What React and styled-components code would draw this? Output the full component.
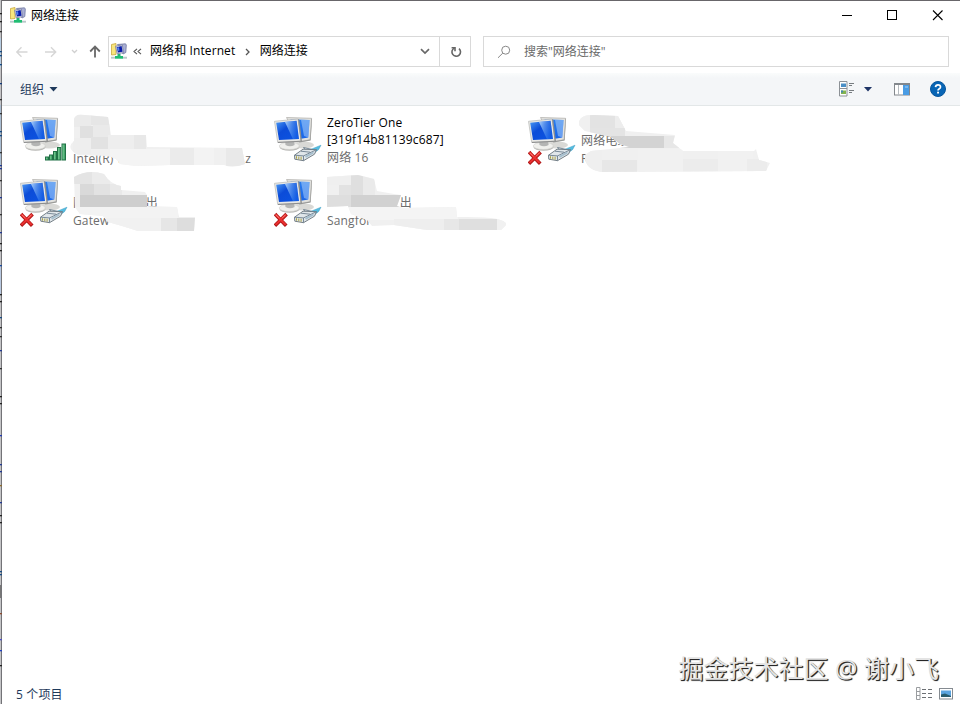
import React from "react";
import styled, { createGlobalStyle } from "styled-components";

const GlobalStyle = createGlobalStyle`
    * { box-sizing: border-box; }
    body {
        margin: 0;
        background: #fff;
        overflow: hidden;
    }
    svg { display: block; }
`

const Desktop = styled.div`
    width: 960px;
    height: 704px;
    display: flex;
    font-family: "Open Sans", "Noto Sans CJK SC", sans-serif;
    font-size: 12px;
    color: #000;
`
const Window = styled.div`
    flex: 1;
    min-width: 0;
    height: 704px;
    border-top: 1px solid #68666a;
    display: flex;
    flex-direction: column;
    position: relative;
`
const TitleBar = styled.div`
    height: 30px;
    padding: 0 0 1px 8px;
    display: flex;
    align-items: center;
    flex-shrink: 0;
`
const Title = styled.div`
    flex: 1;
    margin-left: 5px;
    padding-top: 1px;
    line-height: 18px;
`
const Caption = styled.div`
    width: 45.5px;
    height: 29px;
    display: flex;
    align-items: center;
    justify-content: center;
    padding-left: 1px;
`
const NavBar = styled.div`
    height: 42px;
    display: flex;
    align-items: center;
    padding: 0 11px 1px 13px;
    flex-shrink: 0;
`
const AddressBar = styled.div`
    width: 363px;
    height: 31px;
    margin: 0 12px 0 6px;
    border: 1px solid #d9d9d9;
    display: flex;
    align-items: center;
    padding-left: 2px;
`
const Crumb = styled.span`
    margin-left: ${props => props.$gap}px;
    line-height: 18px;
    letter-spacing: ${props => props.$track || 0}px;
    white-space: pre;
    padding-bottom: 1px;
`
const Refresh = styled.div`
    width: 31px;
    height: 29px;
    border-left: 1px solid #d9d9d9;
    display: flex;
    align-items: center;
    justify-content: center;
    padding-left: 1px;
`
const SearchBox = styled.div`
    flex: 1;
    height: 31px;
    border: 1px solid #d9d9d9;
    display: flex;
    align-items: center;
    padding-left: 13px;
    color: #6a6a6a;
    span {
        margin-left: 13px;
        line-height: 18px;
    }
`
const ToolBar = styled.div`
    height: 33px;
    padding: 0 14px 0 18px;
    border-bottom: 1px solid #e3e7e8;
    background: linear-gradient(#fafcfc, #f4f6f8 5px);
    color: #1e395b;
    display: flex;
    align-items: center;
    flex-shrink: 0;
`
const Spacer = styled.div`
    flex: 1;
`
const Tool = styled.div`
    margin-left: ${props => props.$gap}px;
`
const Items = styled.div`
    flex: 1;
    padding: 8px 0 0 18px;
    display: grid;
    grid-template-columns: repeat(3, 254px);
    grid-auto-rows: 62px;
    align-content: start;
`
const Item = styled.div`
    position: relative;
    display: flex;
`
const ItemText = styled.div`
    margin-left: 5px;
    padding-top: ${props => props.$top}px;
`
const Line = styled.div`
    height: 17.4px;
    line-height: 17.4px;
    white-space: pre;
    display: flex;
    color: ${props => props.$grey ? '#6d6d6d' : '#000'};
    letter-spacing: ${props => props.$track || 0}px;
`
const Tail = styled.span`
    margin-left: auto;
`
const Smudge = styled.svg`
    position: absolute;
    left: 0;
    top: 0;
    overflow: visible;
`
const StatusBar = styled.div`
    height: 20px;
    padding: 0 7px 1px 14px;
    color: #1e395b;
    letter-spacing: 0.15px;
    display: flex;
    align-items: center;
    flex-shrink: 0;
`
const Watermark = styled.div`
    position: absolute;
    right: 21px;
    bottom: 18px;
    font-family: "Open Sans", "Noto Sans CJK SC", sans-serif;
    font-size: 25px;
    line-height: 36px;
    white-space: nowrap;
    color: #e4e4e4;
    text-shadow: 1px 1px 1px #222, 1px 1px 0 #555;
`

const ticks = [
    [13, '#222'], [21, '#222'], [31, '#333'], [51, '#184a80'], [55, '#184a80'], [64, '#184a80'], [83, '#123a78'],
    [99, '#333'], [113, '#333'], [131, '#184a80'], [135, '#184a80'], [152, '#333'], [165, '#223a90'], [168, '#223a90'],
    [180, '#333'], [197, '#223a90'], [214, '#333'], [232, '#223a90'], [243, '#222'], [250, '#222'], [265, '#1e4a98'],
    [294, '#222'], [301, '#222'], [317, '#184a80'], [327, '#333'], [336, '#333'], [350, '#223a90'], [368, '#333'],
    [396, '#222'], [403, '#222'], [435, '#223ab0'], [464, '#223a90'], [471, '#223a90'], [485, '#8a6a30'],
    [502, '#223a90'], [515, '#222'], [522, '#222'], [571, '#184a80'], [574, '#184a80'], [613, '#8a4a30'],
    [639, '#5050c0'], [650, '#2040c0'], [665, '#222'],
]

const LeftEdge = () => (
    <svg width="2" height="704">
        <rect width="1" height="704" fill="#c4c4c6" />
        <rect x="1" width="1" height="704" fill="#737377" />
        <rect y="38" width="1" height="30" fill="#b7cde2" />
        <rect y="105" width="1" height="60" fill="#a9bdd2" />
        <rect y="265" width="1" height="30" fill="#b8c8e0" />
        <rect y="585" width="1" height="13" fill="#777" />
        {ticks.map(([y, color]) => (
            <rect key={y} y={y} width="2" height="1.3" fill={color} />
        ))}
    </svg>
)

const NetIcon = () => (
    <svg width="16" height="17" viewBox="0 0 16 17">
        <path d="M0.5 1.5 L5 .5 V11.5 L0.5 12Z" fill="#f7e67d" stroke="#c9a83d" strokeWidth=".8" />
        <path d="M6.5 1.5 L14.5 .8 L15.3 2 L14.8 9.5 L12 11Z" fill="#a9afd4" stroke="#7076a0" strokeWidth=".8" />
        <path d="M4.5 3.3 L11.3 1.8 L12.5 9.7 L6.2 10.7Z" fill="#d9dcec" stroke="#777c9e" strokeWidth=".8" />
        <path d="M5.7 4.3 L10.6 3.1 L11.6 8.7 L7 9.5Z" fill="#0a1caa" />
        <path d="M6 4.8 L8 4.3 L8.5 7.5 L6.8 8Z" fill="#5484ed" />
        <rect x="6.5" y="11" width="3" height="3" fill="#23b273" />
        <rect x="4" y="13" width="8" height="2.7" fill="#20bd73" />
        <path d="M0 14.3H4M12 14.3H16" stroke="#a9b9bc" />
        <path d="M0 15.5H4M12 15.5H16" stroke="#d0dcdb" />
    </svg>
)

const Arrow = ({ left, color }) => (
    <svg width="14" height="12" viewBox="0 0 14 12" fill="none" stroke={color} strokeWidth="1.4">
        {left ? <path d="M12.5 6H2M6.5 1.3L1.8 6L6.5 10.7" /> : <path d="M1 6H11.5M7 1.3L11.7 6L7 10.7" />}
    </svg>
)

const Computers = () => (
    <g>
        <ellipse cx="29" cy="31" rx="11" ry="3.5" fill="#d9d9d6" />
        <path d="M12.5 3.5 L37.6 4.3 L36 25.8 L25 27.8Z" fill="#e2e2df" stroke="#b5b4b0" strokeWidth=".8" />
        <path d="M37.6 4.3 L38 5 L36.7 26.5 L25.5 28.5 L25 27.6 L36 25.5Z" fill="#999a98" />
        <path d="M16.5 5.2 L35.6 6 L34.3 23.5 L25.5 25Z" fill="url(#screenBack)" />
        <path d="M27 6 L35.6 6 L34.3 23.5 L30 22Z" fill="#c5e1fc" opacity=".45" />
        <ellipse cx="15.5" cy="33" rx="10" ry="3.8" fill="#b8b8b5" />
        <ellipse cx="15.3" cy="31.9" rx="10" ry="3.6" fill="#f0f0ed" stroke="#cfcfcb" strokeWidth=".6" />
        <path d="M11 26 H20 L20.6 31 Q16 33.5 11.5 31Z" fill="#b4b5b4" />
        <path d="M.5 7.3 L24 5 L27 27.2 L3.7 28.2Z" fill="#e9e9e6" stroke="#bdbebc" strokeWidth=".8" />
        <path d="M24 5 L25.3 5.7 L28 27.8 L4 29 L3.7 28 L26.6 26.8Z" fill="#8d8e8e" />
        <path d="M2.2 8.8 L22.6 6.8 L25 25 L5 26Z" fill="url(#screenFront)" />
        <path d="M11 8 L22.6 6.8 L25 25 L19 25.3Z" fill="url(#glare)" />
    </g>
)

const Signal = () => (
    <g stroke="#217146" strokeWidth="1" fill="url(#bars)">
        <rect x="25.5" y="43" width="3" height="3" />
        <rect x="29.5" y="41" width="3" height="5" />
        <rect x="33.5" y="37.5" width="3" height="8.5" />
        <rect x="37.5" y="33.5" width="3.2" height="12.5" />
        <rect x="42" y="30" width="3.5" height="16" />
    </g>
)

const Plug = () => (
    <g strokeLinejoin="round" transform="translate(0 1.7)">
        <path d="M36 34 L47 29.5 L44.5 34 L37.5 39Z" fill="#54bde1" stroke="#3799c0" strokeWidth=".5" />
        <path d="M20.5 39.5 L29 33.5 L42.5 34 L40.5 38.5 L29.5 45 L20.8 43.5Z" fill="#e0e6ea" stroke="#68737b" strokeWidth=".9" />
        <path d="M20.5 39.5 L29.5 40.2 L42.5 34M29.5 40.2 V45M27 35.5 L36 36.5M31 33.6 L29.5 31.8 L38 33.7" fill="none" stroke="#6d7f8e" strokeWidth=".9" />
        <path d="M22.5 40.5V43M24.8 40.8V43.6M27.1 41V44" stroke="#ada345" />
        <path d="M31.5 41.2L39.5 36.8" stroke="#a5becd" strokeWidth="1.8" />
    </g>
)

const Cross = () => (
    <g strokeLinecap="square" transform="translate(0 2.4)">
        <path d="M2.3 37 L11 46 M11.3 37 L2.2 46" stroke="#ae1717" strokeWidth="3.6" />
        <path d="M2.3 36.8 L11 45.8 M11.3 36.8 L2.2 45.8" stroke="#eb3030" strokeWidth="2" />
        <path d="M2 36.6 L5 39.4 M11.3 36.6L8.5 39.4" stroke="#ff8a80" strokeWidth=".8" />
    </g>
)

const ConnectionIcon = ({ wifi, off }) => (
    <svg width="48" height="54" viewBox="0 0 48 54">
        <defs>
            <linearGradient id="screenFront" x1="0" y1="0" x2="1" y2="1">
                <stop offset="0" stopColor="#4c9af4" />
                <stop offset=".4" stopColor="#0c4cd8" />
                <stop offset="1" stopColor="#0b55e4" />
            </linearGradient>
            <linearGradient id="screenBack" x1="0" y1="0" x2="0" y2="1">
                <stop offset="0" stopColor="#2b7dec" />
                <stop offset="1" stopColor="#1965e8" />
            </linearGradient>
            <linearGradient id="glare" x1="0" y1="0" x2="1" y2=".3">
                <stop offset="0" stopColor="#c9e5ff" stopOpacity=".8" />
                <stop offset="1" stopColor="#5eb0ff" stopOpacity=".1" />
            </linearGradient>
            <linearGradient id="bars">
                <stop offset="0" stopColor="#8cd9a4" />
                <stop offset="1" stopColor="#299356" />
            </linearGradient>
        </defs>
        <Computers />
        {wifi ? <Signal /> : <Plug />}
        {off && <Cross />}
    </svg>
)

// every smudge: the soft outline first, then its [x, y, width, height, colour] blocks
const smudges = {
    wifi: {
        shape: 'M54 5 Q56 -1 65 1 L88 3 L91 21 L126 21 L127 33 L222 34 L225 50 Q212 55 204 51 L150 51 L116 52 L100 50 Q97 43 86 42 L58 41 Q45 34 54 27Z',
        blocks: [[53, 1, 18, 12, '#ebebeb'], [71, 1, 19, 10, '#e6e6e6'], [60, 12, 13, 12, '#e0e0e0'], [73, 11, 17, 13, '#eaeaea'],
            [53, 24, 18, 16, '#eeeeee'], [71, 23, 17, 12, '#e2e2e2'], [88, 21, 26, 14, '#eeeeee'], [114, 21, 12, 14, '#e8e8e8'],
            [90, 35, 60, 17, '#f4f4f4'], [150, 34, 24, 17, '#ebebeb'], [174, 34, 20, 17, '#f3f3f3'], [206, 34, 20, 18, '#e9e9e9']],
    },
    unplugged: {
        shape: 'M51 11 Q50 0 67 1 L90 2 L98 17 L147 21 L145 29 L155 37 L226 37 L228 35 L231 46 L242 49 L238 57 L73 58 Q56 55 57 41 L63 37 L101 33 L92 30 L83 23 L57 17Z',
        blocks: [[51, 1, 11, 16, '#f0f0f0'], [62, 1, 25, 13, '#e3e3e3'], [87, 1, 11, 14, '#ededed'], [62, 14, 35, 10, '#e4e4e4'],
            [83, 22, 53, 12, '#d3d3d3'], [136, 22, 15, 12, '#e7e7e7'], [54, 35, 20, 23, '#efefef'], [74, 46, 35, 12, '#e7e7e7'],
            [110, 35, 45, 23, '#f1f1f1'], [155, 45, 35, 13, '#ececec'], [190, 35, 35, 23, '#f1f1f1'], [219, 45, 20, 13, '#ececec']],
    },
    gateway: {
        shape: 'M54 1 Q68 -7 84 -2 Q90 8 101 10 L101 14 L125 16 L127 19 L127 30 L157 31 L159 41 L175 41 L174 55 L118 55 L102 50 L88 46 L83 40 L60 38 L55 31Z',
        blocks: [[54, -6, 18, 14, '#e4e4e4'], [72, -6, 18, 14, '#ebebeb'], [60, 8, 14, 12, '#d9d9d9'], [74, 8, 16, 12, '#e2e2e2'],
            [90, 8, 12, 12, '#e9e9e9'], [60, 19, 67, 12, '#cecece'], [54, 31, 104, 12, '#f3f3f3'],
            [86, 42, 55, 13, '#f1f1f1'], [141, 42, 16, 13, '#e6e6e6'], [157, 42, 18, 13, '#dddddd']],
    },
    sangfor: {
        shape: 'M53 1 L84 -1 L100 3 L103 15 L120 18 L127 19 L123 30 L129 32 L182 31 L183 41 Q234 40 232 49 L227 54 L153 54 L120 49 L98 50 L93 44 L77 38 L74 30 L53 31Z',
        blocks: [[53, -1, 24, 10, '#efefef'], [77, -1, 12, 20, '#dfdfdf'], [89, -1, 12, 20, '#eaeaea'], [65, 9, 12, 10, '#e2e2e2'],
            [53, 19, 24, 12, '#dedede'], [77, 19, 50, 12, '#d1d1d1'], [74, 31, 110, 13, '#f4f4f4'], [120, 43, 50, 12, '#eeeeee'],
            [170, 43, 15, 12, '#e7e7e7'], [185, 43, 38, 12, '#dfdfdf'], [223, 43, 10, 12, '#f1f1f1']],
    },
}

const connections = [
    { wifi: true, name: ' ', sub: ' ', device: 'Intel(R) W', tail: 'z', end: 178, smudge: 'wifi' },
    { name: 'ZeroTier One', sub: '[319f14b81139c687]', device: '网络 16', top: 0 },
    { off: true, name: ' ', sub: '网络电缆', device: 'R', smudge: 'unplugged', subGrey: true },
    { off: true, name: '             -', sub: '网', subTail: '出', subEnd: 85, device: 'Gatew', smudge: 'gateway', subGrey: true },
    { off: true, name: ' ', sub: ' ', subTail: '出', subEnd: 85, device: 'Sangfor', smudge: 'sangfor', subGrey: true },
]

const SmudgeMark = ({ kind }) => (
    <Smudge width="254" height="62" viewBox="0 0 254 62">
        <clipPath id={'clip-' + kind}><path d={smudges[kind].shape} /></clipPath>
        <g clipPath={`url(#clip-${kind})`}>
            <rect y="-8" width="254" height="70" fill="#f0f0f0" />
            {smudges[kind].blocks.map(([x, y, w, h, fill], i) => (
                <rect key={i} x={x} y={y} width={w} height={h} fill={fill} />
            ))}
        </g>
    </Smudge>
)

const Connection = ({ item }) => (
    <Item>
        <ConnectionIcon wifi={item.wifi} off={item.off} />
        <ItemText $top={item.top ?? 1}>
            <Line $track={0.15}>{item.name}</Line>
            <Line $grey={item.subGrey} $track={0.15} style={{ width: item.subEnd }}>
                {item.sub}{item.subTail && <Tail>{item.subTail}</Tail>}
            </Line>
            <Line $grey $track={0.15} style={{ width: item.end }}>
                {item.device}{item.tail && <Tail>{item.tail}</Tail>}
            </Line>
        </ItemText>
        {item.smudge && <SmudgeMark kind={item.smudge} />}
    </Item>
)

const App = () => {
    return (
        <Desktop>
            <GlobalStyle />
            <LeftEdge />
            <Window>
                <TitleBar>
                    <NetIcon />
                    <Title>网络连接</Title>
                    <Caption>
                        <svg width="11" height="11"><path d="M1 5.5H11" stroke="#000" /></svg>
                    </Caption>
                    <Caption>
                        <svg width="11" height="11"><rect x=".5" y=".5" width="9" height="9" fill="none" stroke="#000" /></svg>
                    </Caption>
                    <Caption>
                        <svg width="11" height="11"><path d="M1 .5L10.5 10M10.5 .5L1 10" stroke="#000" strokeWidth="1.1" /></svg>
                    </Caption>
                </TitleBar>
                <NavBar>
                    <Arrow left color="#d6d6d6" />
                    <Tool $gap={15}><Arrow color="#d6d6d6" /></Tool>
                    <Tool $gap={13}>
                        <svg width="7" height="5"><path d="M1 1L3.5 3.5L6 1" fill="none" stroke="#d0d0d0" strokeWidth="1.3" /></svg>
                    </Tool>
                    <Tool $gap={11}>
                        <svg width="13" height="13" fill="none" stroke="#686868" strokeWidth="1.8"><path d="M6 12.5V2M1.2 6.5L6 1.6L10.8 6.5" /></svg>
                    </Tool>
                    <AddressBar>
                        <NetIcon />
                        <Tool $gap={6}>
                            <svg width="9" height="7" fill="none" stroke="#555" strokeWidth="1.1"><path d="M4 .8L1 3.5L4 6.2M8 .8L5 3.5L8 6.2" /></svg>
                        </Tool>
                        <Crumb $gap={8} $track={0.1}>网络和 Internet</Crumb>
                        <Tool $gap={9.5}>
                            <svg width="6" height="8" fill="none" stroke="#555" strokeWidth="1.3"><path d="M1 1L4 4L1 7" /></svg>
                        </Tool>
                        <Crumb $gap={9}>网络连接</Crumb>
                        <Spacer />
                        <svg width="10" height="7" fill="none" stroke="#686868" strokeWidth="1.7"><path d="M1 1.2L5 5L9 1.2" /></svg>
                        <Tool $gap={9}>
                            <Refresh>
                                <svg width="12" height="12" viewBox="0 0 12 12" fill="none" stroke="#666" strokeWidth="1.6">
                                    <path d="M9 2.6A4.3 4.3 0 1 1 4.2 2.1" /><path d="M1.6 1.7H5V5.2" />
                                </svg>
                            </Refresh>
                        </Tool>
                    </AddressBar>
                    <SearchBox>
                        <svg width="14" height="14" fill="none" stroke="#888" strokeWidth="1"><circle cx="8.7" cy="5.2" r="4" /><path d="M5.8 8.1L1 12.8" /></svg>
                        <span>搜索"网络连接"</span>
                    </SearchBox>
                </NavBar>
                <ToolBar>
                    <span>组织</span>
                    <Tool $gap={5}>
                        <svg width="9" height="5"><path d="M.5 0H8.5L4.5 4.5Z" fill="#1e395b" /></svg>
                    </Tool>
                    <Spacer />
                    <svg width="16" height="16">
                        <path d="M1.5 .5H9V15H1.5ZM1.5 7.5H9" fill="#fff" stroke="#8c9196" />
                        <rect x="3" y="2.5" width="5" height="3.5" fill="#4a8fc6" />
                        <rect x="3" y="9.5" width="5" height="3.5" fill="#82b34d" />
                        <rect x="3" y="9.5" width="2" height="2" fill="#4386b5" />
                        <path d="M11 2.5H16M11 4.5H14M11 9.5H16M11 11.5H14" stroke="#777c80" />
                    </svg>
                    <Tool $gap={10}>
                        <svg width="8" height="5"><path d="M0 0H8L4 4.5Z" fill="#1e3466" /></svg>
                    </Tool>
                    <Tool $gap={22}>
                        <svg width="16" height="13">
                            <rect x=".5" y=".5" width="15" height="11.5" fill="#fff" stroke="#83888d" />
                            <path d="M0 1H16" stroke="#83888d" strokeWidth="2" />
                            <path d="M4.5 2V12" stroke="#b5bbc0" />
                            <rect x="9" y="2" width="6" height="10" fill="#4a9ce4" />
                            <path d="M11 4H14" stroke="#a5d2f8" />
                        </svg>
                    </Tool>
                    <Tool $gap={20}>
                        <svg width="16" height="16" viewBox="0 0 16 16">
                            <circle cx="8" cy="8" r="7.5" fill="#0865b5" stroke="#07569d" />
                            <path d="M5.5 6.1Q5.7 3.8 8 3.8Q10.5 3.8 10.5 6Q10.5 7.2 9 8Q8 8.6 8 9.6" fill="none" stroke="#fff" strokeWidth="1.7" />
                            <rect x="7.1" y="10.7" width="1.9" height="1.8" fill="#fff" />
                        </svg>
                    </Tool>
                </ToolBar>
                <Items>
                    {connections.map((item, i) => <Connection key={i} item={item} />)}
                </Items>
                <StatusBar>
                    <span>5 个项目</span>
                    <Spacer />
                    <svg width="16" height="13">
                        <path d="M.5 .5H4V12.5H.5ZM.5 4.5H4M.5 8.5H4" fill="#fff" stroke="#9a9da0" />
                        <path d="M6 2.5H10M12 2.5H16M6 6.5H10M12 6.5H16M6 10.5H10M12 10.5H16" stroke="#6c7074" />
                    </svg>
                    <Tool $gap={7}>
                        <svg width="14" height="12">
                            <rect x=".5" y=".5" width="13" height="10.5" fill="#fff" stroke="#858b91" />
                            <rect x="2" y="2.5" width="10" height="6.5" fill="#5ba4df" />
                            <path d="M2 9V6.5L6 5.5L12 8V9Z" fill="#285c6e" />
                        </svg>
                    </Tool>
                </StatusBar>
                <Watermark>掘金技术社区 @ 谢小飞</Watermark>
            </Window>
        </Desktop>
    )
}

export default App;
